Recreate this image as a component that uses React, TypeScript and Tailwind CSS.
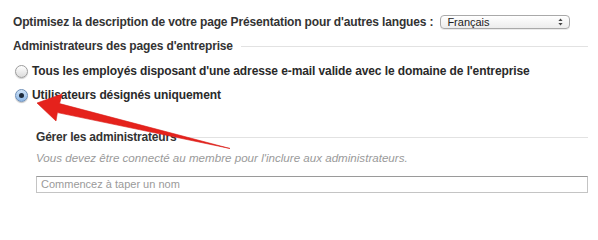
import React from 'react';

const font = { fontFamily: '"Liberation Sans", Arial, sans-serif' };

function Radio({ checked }: { checked?: boolean }) {
  if (checked) {
    return (
      <span className="w-[13px] h-[13px] rounded-full border border-[#6d8fb8] bg-gradient-to-b from-[#cfe3f7] to-[#8db7e6] flex items-center justify-center shrink-0 shadow-[0_1px_1px_rgba(0,0,0,0.25)]">
        <span className="w-[5px] h-[5px] rounded-full bg-[#1d2b3c]" />
      </span>
    );
  }
  return (
    <span className="w-[13px] h-[13px] rounded-full border border-[#9c9c9c] bg-gradient-to-b from-[#ffffff] to-[#dcdcdc] shrink-0 shadow-[0_1px_1px_rgba(0,0,0,0.2)]" />
  );
}

function Arrow() {
  return (
    <svg className="absolute left-0 top-0 pointer-events-none" width="598" height="201" viewBox="0 0 598 201">
      <polygon
        points="37,103 62,94 59.6,103.6 230,148.5 57.4,112.6 56,121"
        fill="#e5221c"
        stroke="#d81a14"
        strokeWidth="0.6"
        strokeLinejoin="round"
      />
    </svg>
  );
}

export default function App() {
  return (
    <div className="relative w-[598px] h-[201px] bg-white overflow-hidden text-[#333]" style={font}>
      <div className="pl-[13px] pr-[10px] pt-[14px]">
        {/* Language row */}
        <div className="flex items-center h-[16px]">
          <span className="text-[12px] font-bold whitespace-nowrap tracking-[-0.15px]">
            Optimisez la description de votre page Présentation pour d'autres langues :
          </span>
          <div className="ml-[7px] w-[130px] h-[14px] rounded-[4px] border border-[#a9a9a9] bg-gradient-to-b from-[#ffffff] to-[#ececec] flex items-center justify-between pl-[6px] pr-[6px] shadow-[0_1px_0_rgba(0,0,0,0.08)]">
            <span className="text-[11px] text-[#222] leading-none">Français</span>
            <svg width="5" height="8" viewBox="0 0 5 8">
              <polygon points="2.5,0.5 4.6,3 0.4,3" fill="#444" />
              <polygon points="2.5,7.5 4.6,5 0.4,5" fill="#444" />
            </svg>
          </div>
        </div>

        {/* Section heading */}
        <div className="flex items-center h-[16px] mt-[8px]">
          <span className="text-[12px] font-bold whitespace-nowrap tracking-[-0.15px]">Administrateurs des pages d'entreprise</span>
          <div className="flex-1 h-px bg-[#e2e2e2] ml-[8px]" />
        </div>

        {/* Radios */}
        <div className="flex items-center h-[16px] mt-[9px] pl-[2px]">
          <Radio />
          <span className="ml-[4px] text-[12px] font-bold text-[#2a2a2a] whitespace-nowrap tracking-[-0.1px]">
            Tous les employés disposant d'une adresse e-mail valide avec le domaine de l'entreprise
          </span>
        </div>
        <div className="flex items-center h-[16px] mt-[8px] pl-[2px]">
          <Radio checked />
          <span className="ml-[4px] text-[12px] font-bold text-[#2a2a2a] whitespace-nowrap tracking-[-0.1px]">
            Utilisateurs désignés uniquement
          </span>
        </div>

        {/* Admins block */}
        <div className="pl-[23px] mt-[26px]">
          <div className="flex items-center h-[16px]">
            <span className="text-[12px] font-bold whitespace-nowrap tracking-[-0.2px]">Gérer les administrateurs</span>
            <div className="flex-1 h-px bg-[#e2e2e2] ml-[2px]" />
          </div>
          <div className="flex items-center h-[16px] mt-[5px]">
            <span className="text-[11.6px] italic text-[#9a9a9a] whitespace-nowrap">
              Vous devez être connecté au membre pour l'inclure aux administrateurs.
            </span>
          </div>
          <div className="mt-[10px] h-[17px] border border-[#c4c4c4] border-t-[#9a9a9a] flex items-center pl-[4px]">
            <span className="text-[11px] text-[#9a9a9a]">Commencez à taper un nom</span>
          </div>
        </div>
      </div>
      <Arrow />
    </div>
  );
}
